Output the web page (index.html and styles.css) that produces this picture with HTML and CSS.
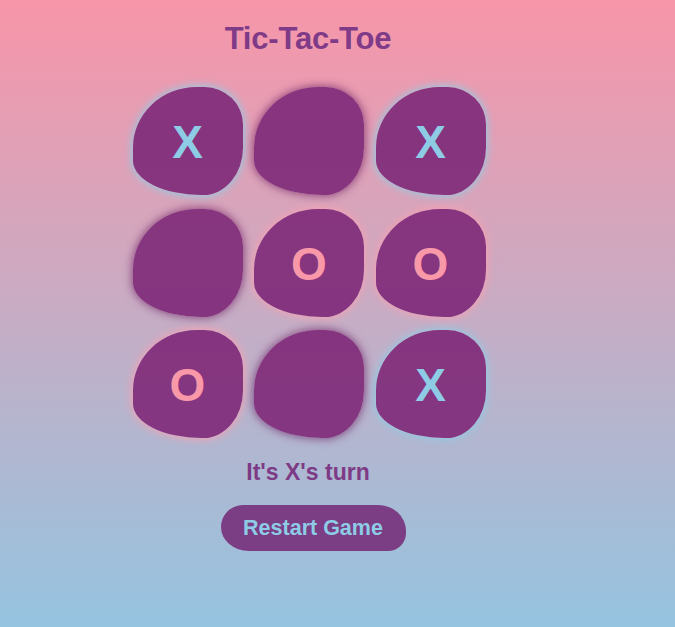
FILE: index.html
```html
<!DOCTYPE html>
<html lang="en">
<head>
<meta charset="utf-8">
<title>Tic-Tac-Toe</title>
<link rel="stylesheet" href="styles.css">
</head>
<body>
<main class="game">
  <h1 class="title">Tic-Tac-Toe</h1>
  <div class="board">
    <div class="cell cell-x">X</div>
    <div class="cell cell-empty"></div>
    <div class="cell cell-x">X</div>
    <div class="cell cell-empty"></div>
    <div class="cell cell-o">O</div>
    <div class="cell cell-o">O</div>
    <div class="cell cell-o">O</div>
    <div class="cell cell-empty"></div>
    <div class="cell cell-x">X</div>
  </div>
  <p class="status">It's X's turn</p>
  <div class="actions">
    <button class="restart" type="button">Restart Game</button>
  </div>
</main>
</body>
</html>
```
FILE: styles.css
```css
html {
  height: 100%;
}
body {
  margin: 8px;
  min-height: calc(100% - 16px);
  background: linear-gradient(to bottom, #f895a9 0%, #95c4e0 100%) fixed;
  font-family: "Liberation Sans", Arial, sans-serif;
}
.game {
  width: 600px;
  display: flex;
  flex-direction: column;
  align-items: center;
}
.title {
  margin: 13px 0 0;
  font-size: 31px;
  font-weight: bold;
  color: #7f3b87;
  letter-spacing: -0.2px;
}
.board {
  margin-top: 30px;
  display: grid;
  grid-template-columns: repeat(3, 110px);
  grid-template-rows: repeat(3, 108px);
  column-gap: 11.5px;
  row-gap: 13.5px;
  margin-left: 2px;
}
.cell {
  display: flex;
  align-items: center;
  justify-content: center;
  background: rgba(128, 44, 122, 0.93);
  border-radius: 58% 35% 36% 62% / 56% 35% 44% 32%;
  font-size: 46px;
  font-weight: bold;
  padding-top: 2px;
  box-sizing: border-box;
}
.cell-x {
  color: #8ecce6;
  box-shadow: 0 0 8px 1px #8ecce6;
}
.cell-o {
  color: #f898a8;
  box-shadow: 0 0 8px 1px #f7a0b2;
}
.cell-empty {
  box-shadow: 0 0 9px 1px rgba(110, 30, 100, 0.7);
}
.status {
  margin: 21px 0 0;
  font-size: 23px;
  font-weight: bold;
  color: #7d3b86;
}
.actions {
  margin-top: 19px;
  display: flex;
  justify-content: center;
  padding-left: 10px;
}
.restart {
  width: 185px;
  height: 46px;
  border: none;
  background: #7b3d84;
  color: #8ecce6;
  font-family: "Liberation Sans", Arial, sans-serif;
  font-size: 21.5px;
  font-weight: bold;
  border-radius: 22px 28px 18px 28px / 22px 26px 18px 24px;
  padding: 0;
  cursor: pointer;
}
```
